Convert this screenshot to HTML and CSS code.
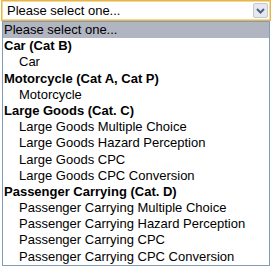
FILE: index.html
```html
<!DOCTYPE html>
<html>
<head>
    <title>Test Selection</title>
    <link rel="stylesheet" href="styles.css">
</head>
<body>
    <div class="page">
        <div class="select-box">
            <span class="select-value">Please select one...</span>
            <span class="select-arrow">
                <svg width="9" height="6" viewBox="0 0 9 6"><path d="M1 1 L4.5 4.5 L8 1" fill="none" stroke="#4d6185" stroke-width="2"/></svg>
            </span>
        </div>
        <div class="select-list">
            <div class="option selected">Please select one...</div>
            <div class="group">Car (Cat B)</div>
            <div class="option">Car</div>
            <div class="group">Motorcycle (Cat A, Cat P)</div>
            <div class="option">Motorcycle</div>
            <div class="group">Large Goods (Cat. C)</div>
            <div class="option">Large Goods Multiple Choice</div>
            <div class="option">Large Goods Hazard Perception</div>
            <div class="option">Large Goods CPC</div>
            <div class="option">Large Goods CPC Conversion</div>
            <div class="group">Passenger Carrying (Cat. D)</div>
            <div class="option">Passenger Carrying Multiple Choice</div>
            <div class="option">Passenger Carrying Hazard Perception</div>
            <div class="option">Passenger Carrying CPC</div>
            <div class="option">Passenger Carrying CPC Conversion</div>
        </div>
    </div>
</body>
</html>
```

FILE: styles.css
```css
body {
    margin: 0;
    font-family: "Liberation Sans", Arial, sans-serif;
    font-size: 13px;
    background-color: #ffffff;
    color: #000000;
}

.page {
    width: 272px;
    height: 267px;
    overflow: hidden;
}

.select-box {
    display: flex;
    align-items: center;
    justify-content: space-between;
    height: 21px;
    margin: 0 1px 0 1px;
    box-sizing: border-box;
    border: 1px solid #e2b652;
    box-shadow: inset 0 0 0 1px #f7d88c;
    background-color: #ffffff;
    padding: 0 2px 0 5px;
}

.select-value {
    font-size: 13px;
}

.select-arrow {
    display: flex;
    align-items: center;
    justify-content: center;
    width: 15px;
    height: 15px;
    box-sizing: border-box;
    border: 1px solid #c3c8d6;
    border-radius: 2px;
    background-color: #e6e8ef;
}

.select-list {
    margin-left: 2px;
    width: 268px;
    box-sizing: border-box;
    border: 1px solid #7f9db9;
    background-color: #ffffff;
}

.option,
.group {
    height: 16.2px;
    line-height: 16.2px;
    white-space: nowrap;
}

.group {
    font-weight: bold;
    padding-left: 1px;
}

.option {
    padding-left: 16px;
}

.option.selected {
    padding-left: 1px;
    background-color: #b1b4c1;
}
```
